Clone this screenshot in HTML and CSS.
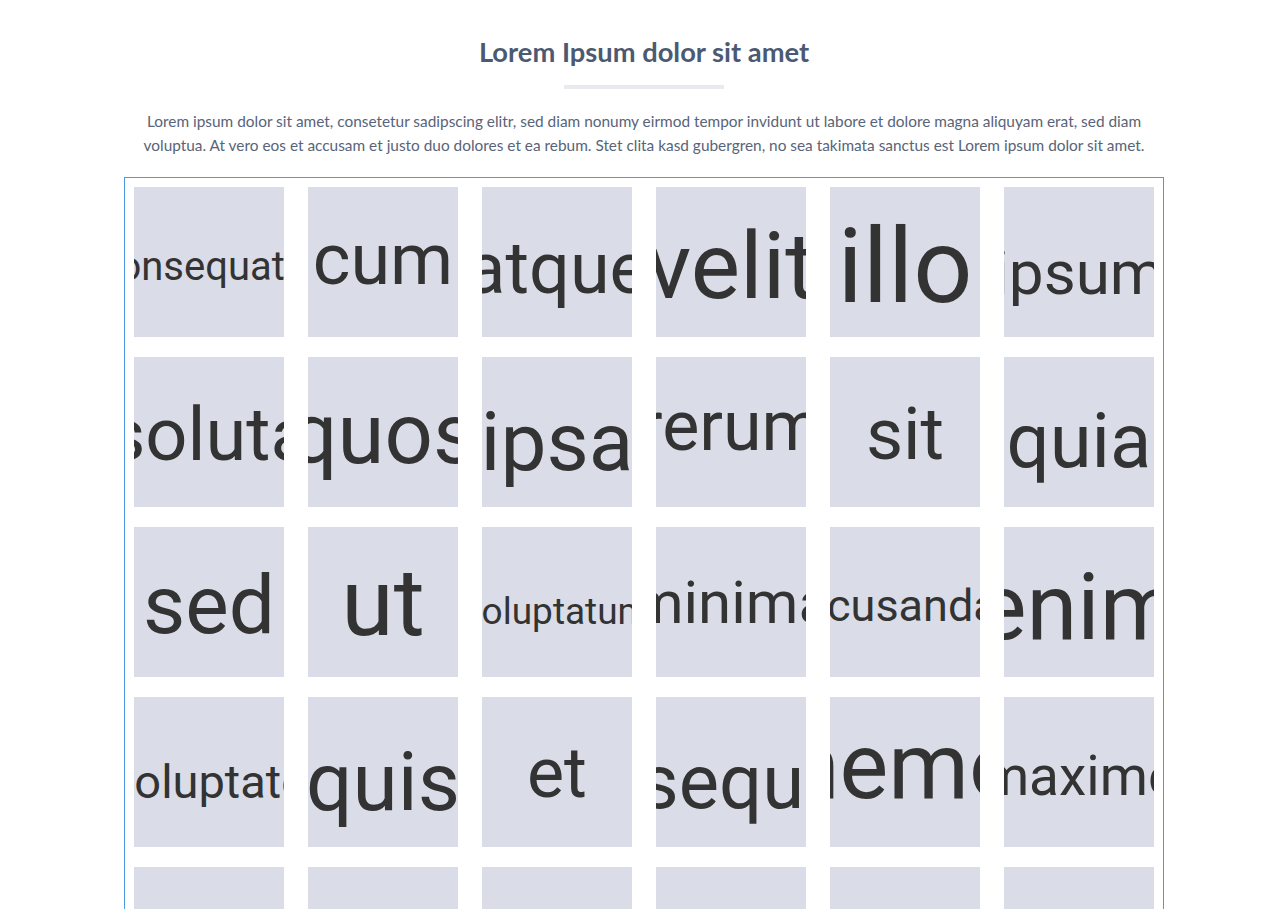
FILE: index.html
```html
<!DOCTYPE html>
<html lang="en">
<head>
<meta charset="utf-8">
<title>Lorem Ipsum</title>
<link rel="stylesheet" href="styles.css">
</head>
<body>
<div class="page">
  <header class="intro">
    <h1 class="title">Lorem Ipsum dolor sit amet</h1>
    <div class="rule"></div>
    <p class="lead">Lorem ipsum dolor sit amet, consetetur sadipscing elitr, sed diam nonumy eirmod tempor invidunt ut labore et dolore magna aliquyam erat, sed diam voluptua. At vero eos et accusam et justo duo dolores et ea rebum. Stet clita kasd gubergren, no sea takimata sanctus est Lorem ipsum dolor sit amet.</p>
  </header>
  <section class="grid">
    <div class="tile"><span class="word" style="font-size:40px;--dy:4px">consequatur</span></div>
    <div class="tile"><span class="word" style="font-size:72px;--dy:-3px">cum</span></div>
    <div class="tile"><span class="word" style="font-size:72px;--dy:6px">atque</span></div>
    <div class="tile"><span class="word" style="font-size:93px;--dy:4px">velit</span></div>
    <div class="tile"><span class="word" style="font-size:104px;--dy:4px">illo</span></div>
    <div class="tile"><span class="word" style="font-size:62px;--dy:10px">ipsum</span></div>

    <div class="tile"><span class="word" style="font-size:74px;--dy:2px">soluta</span></div>
    <div class="tile"><span class="word" style="font-size:85px;--dy:2px">quos</span></div>
    <div class="tile"><span class="word" style="font-size:82px;--dy:10px">ipsa</span></div>
    <div class="tile"><span class="word" style="font-size:70px;--dy:-6px">rerum</span></div>
    <div class="tile"><span class="word" style="font-size:72px;--dy:2px">sit</span></div>
    <div class="tile"><span class="word" style="font-size:76px;--dy:9px">quia</span></div>

    <div class="tile"><span class="word" style="font-size:82px;--dy:3px">sed</span></div>
    <div class="tile"><span class="word" style="font-size:95px;--dy:0px">ut</span></div>
    <div class="tile"><span class="word" style="font-size:37px;--dy:9px">voluptatum</span></div>
    <div class="tile"><span class="word" style="font-size:60px;--dy:0px">minima</span></div>
    <div class="tile"><span class="word" style="font-size:45px;--dy:3px">recusandae</span></div>
    <div class="tile"><span class="word" style="font-size:92px;--dy:5px">enim</span></div>

    <div class="tile"><span class="word" style="font-size:47px;--dy:9px">voluptate</span></div>
    <div class="tile"><span class="word" style="font-size:82px;--dy:10px">quis</span></div>
    <div class="tile"><span class="word" style="font-size:70px;--dy:1px">et</span></div>
    <div class="tile"><span class="word" style="font-size:76px;--dy:10px">sequi</span></div>
    <div class="tile"><span class="word" style="font-size:92px;--dy:-6px">nemo</span></div>
    <div class="tile"><span class="word" style="font-size:55px;--dy:4px">maxime</span></div>

    <div class="tile"><span class="word" style="font-size:50px;--dy:0px">dolor</span></div>
    <div class="tile"><span class="word" style="font-size:60px;--dy:0px">magnam</span></div>
    <div class="tile"><span class="word" style="font-size:70px;--dy:0px">aut</span></div>
    <div class="tile"><span class="word" style="font-size:64px;--dy:0px">eius</span></div>
    <div class="tile"><span class="word" style="font-size:56px;--dy:0px">nihil</span></div>
    <div class="tile"><span class="word" style="font-size:66px;--dy:0px">odit</span></div>
  </section>
</div>
</body>
</html>
```

FILE: styles.css
```css
* {
  box-sizing: border-box;
}

html, body {
  margin: 0;
  padding: 0;
  background: #ffffff;
}

body {
  font-family: "Lato", "Open Sans", "Liberation Sans", sans-serif;
}

.page {
  width: 1040px;
  margin: 0 auto;
}

.intro {
  display: flex;
  flex-direction: column;
  align-items: center;
  padding-top: 36px;
}

.title {
  margin: 0;
  font-size: 27.3px;
  line-height: 32px;
  font-weight: 700;
  color: #4b5a72;
  text-align: center;
}

.rule {
  width: 160px;
  height: 4px;
  margin-top: 17px;
  background: #e8eaee;
}

.lead {
  max-width: 1010px;
  margin: 20px 0 0;
  font-size: 15.4px;
  line-height: 24px;
  color: #586479;
  text-align: center;
}

.grid {
  margin-top: 20px;
  border: 1px solid #4b9ae6;
  border-bottom: none;
  padding: 9px 9px 20px;
  display: grid;
  grid-template-columns: repeat(6, 150px);
  column-gap: 24px;
  row-gap: 20px;
}

.tile {
  width: 150px;
  height: 150px;
  background: #dadde7;
  overflow: hidden;
  display: flex;
  align-items: center;
  justify-content: center;
}

.word {
  font-family: "Roboto", "Liberation Sans", sans-serif;
  color: #333333;
  white-space: nowrap;
  line-height: normal;
  transform: translateY(var(--dy, 0px));
}
```
